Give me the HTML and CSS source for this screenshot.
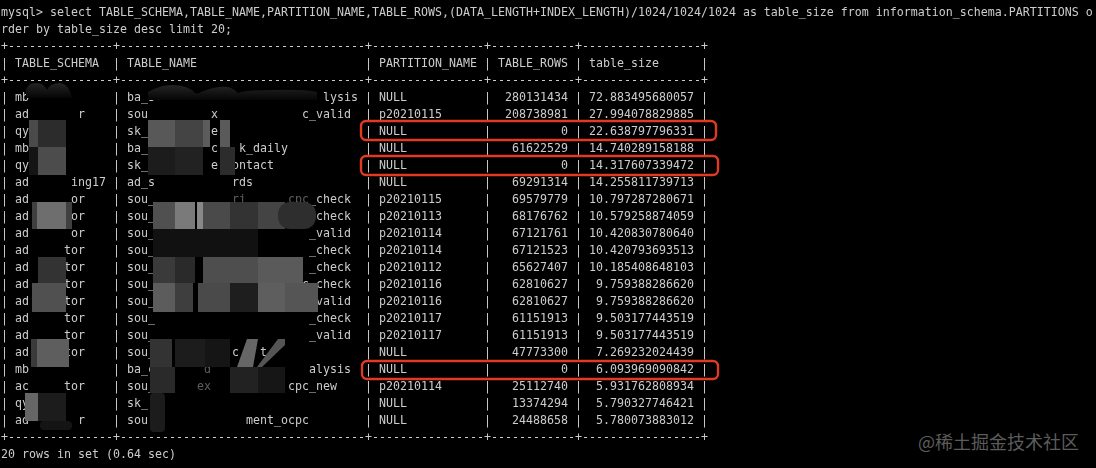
FILE: index.html
```html
<!DOCTYPE html>
<html lang="en">
<head>
<meta charset="utf-8">
<title>mysql terminal</title>
<link rel="stylesheet" href="styles.css">
</head>
<body>
<main class="terminal">
<pre class="output">mysql&gt; select TABLE_SCHEMA,TABLE_NAME,PARTITION_NAME,TABLE_ROWS,(DATA_LENGTH+INDEX_LENGTH)/1024/1024/1024 as table_size from information_schema.PARTITIONS o
rder by table_size desc limit 20;</pre>
<pre class="output table">+---------------+-----------------------------------+----------------+------------+-----------------+
| TABLE_SCHEMA  | TABLE_NAME                        | PARTITION_NAME | TABLE_ROWS | table_size      |
+---------------+-----------------------------------+----------------+------------+-----------------+
| mb            | ba_s                        lysis | NULL           |  280131434 | 72.883495680057 |
| ad       r    | sou         x            c_valid  | p20210115      |  208738981 | 27.994078829885 |
| qy            | sk_         e                     | NULL           |          0 | 22.638797796331 |
| mb            | ba_         c   k_daily           | NULL           |   61622529 | 14.740289158188 |
| qy            | sk_         e  ontact             | NULL           |          0 | 14.317607339472 |
| ad      ing17 | ad_s           rds                | NULL           |   69291314 | 14.255811739713 |
| ad      or    | sou_           ri      cpc_check  | p20210115      |   69579779 | 10.797287280671 |
| ad      or    | sou_                       check  | p20210113      |   68176762 | 10.579258874059 |
| ad      or    | sou_                      _valid  | p20210114      |   67121761 | 10.420830780640 |
| ad     tor    | sou_                      _check  | p20210114      |   67121523 | 10.420793693513 |
| ad     tor    | sou_                      _check  | p20210112      |   65627407 | 10.185408648103 |
| ad     tor    | sou_                     c_check  | p20210116      |   62810627 |  9.759388286620 |
| ad     tor    | sou_                       valid  | p20210116      |   62810627 |  9.759388286620 |
| ad     tor    | sou_                      _check  | p20210117      |   61151913 |  9.503177443519 |
| ad     tor    | sou_                      _valid  | p20210117      |   61151913 |  9.503177443519 |
| ad     tor    | sou_       d   c   t              | NULL           |   47773300 |  7.269232024439 |
| mb            | ba_c       d              alysis  | NULL           |          0 |  6.093969090842 |
| ac     tor    | sou_      ex           cpc_new    | p20210114      |   25112740 |  5.931762808934 |
| qy            | sk_                               | NULL           |   13374294 |  5.790327746421 |
| ad       r    | sou              ment_ocpc        | NULL           |   24488658 |  5.780073883012 |
+---------------+-----------------------------------+----------------+------------+-----------------+
20 rows in set (0.64 sec)</pre>
<svg class="overlay" width="1096" height="468" viewBox="0 0 1096 468" aria-hidden="true">
  <defs>
    <linearGradient id="dome" x1="0" y1="0" x2="0" y2="1">
      <stop offset="0" stop-color="#242424"/>
      <stop offset="1" stop-color="#050505"/>
    </linearGradient>
  </defs>
  <!-- domes at the top of the blur -->
  <path fill="url(#dome)" d="M26 98V90Q28 83 36 83Q44 83 47 90Q50 83 60 83Q69 84 72 98Z"/>
  <path fill="url(#dome)" d="M148 100V92Q160 85 172 85Q188 85 195 93Q199 94 201 92Q215 86 228 87Q235 89 238 93Q245 90 270 90Q305 89 317 92V100Z"/>
  <!-- half-covered glyphs -->
  <g fill="#000000" fill-opacity="0.55">
    <rect x="232" y="190" width="14" height="16"/>
    <rect x="288" y="190" width="21" height="16"/>
    <rect x="204" y="361" width="8" height="16"/>
    <rect x="197" y="378" width="15" height="16"/>
  </g>
  <!-- schema column mosaic -->
  <rect x="29" y="120" width="9" height="27" fill="#4a4a4a"/>
  <rect x="38" y="120" width="28" height="27" fill="#2c2c2c"/>
  <rect x="29" y="147" width="9" height="28" fill="#141414"/>
  <rect x="38" y="147" width="28" height="28" fill="#4c4c4c"/>
  <rect x="32" y="202" width="5" height="27" fill="#404040"/>
  <rect x="37" y="202" width="29" height="27" fill="#6e6e6e"/>
  <rect x="66" y="202" width="6" height="27" fill="#404040"/>
  <rect x="38" y="257" width="28" height="26" fill="#333333"/>
  <rect x="32" y="283" width="34" height="29" fill="#505050"/>
  <rect x="31" y="339" width="6" height="28" fill="#3a3a3a"/>
  <rect x="37" y="339" width="32" height="28" fill="#5e5e5e"/>
  <rect x="25" y="393" width="13" height="28" fill="#666666"/>
  <rect x="38" y="393" width="28" height="28" fill="#1c1c1c"/>
  <rect x="40" y="421" width="32" height="9" rx="4" fill="#141414"/>
  <!-- name column mosaic -->
  <rect x="148" y="120" width="27" height="27" fill="#585858"/>
  <rect x="175" y="120" width="28" height="27" fill="#444444"/>
  <rect x="203" y="120" width="7" height="27" fill="#5c5c5c"/>
  <rect x="220" y="120" width="10" height="27" fill="#5a5a5a"/>
  <rect x="148" y="147" width="27" height="28" fill="#1c1c1c"/>
  <rect x="175" y="147" width="28" height="28" fill="#222222"/>
  <rect x="220" y="147" width="15" height="28" fill="#2c2c2c"/>
  <rect x="153" y="202" width="22" height="27" fill="#505050"/>
  <rect x="175" y="202" width="20" height="27" fill="#7a7a7a"/>
  <rect x="197" y="202" width="6" height="27" fill="#888888"/>
  <rect x="203" y="202" width="27" height="27" fill="#4a4a4a"/>
  <rect x="230" y="202" width="28" height="27" fill="#333333"/>
  <rect x="258" y="202" width="27" height="27" fill="#444444"/>
  <rect x="278" y="202" width="38" height="27" rx="12" fill="#2e2e2e"/>
  <rect x="153" y="229" width="105" height="28" fill="#111111"/>
  <rect x="153" y="257" width="22" height="26" fill="#3a3a3a"/>
  <rect x="175" y="257" width="20" height="26" fill="#2a2a2a"/>
  <rect x="203" y="257" width="55" height="26" fill="#4e4e4e"/>
  <rect x="258" y="257" width="45" height="26" fill="#5a5a5a"/>
  <rect x="153" y="283" width="22" height="29" fill="#5c5c5c"/>
  <rect x="175" y="283" width="18" height="29" fill="#3e3e3e"/>
  <rect x="198" y="283" width="32" height="29" fill="#4a4a4a"/>
  <rect x="230" y="283" width="28" height="29" fill="#1e1e1e"/>
  <rect x="258" y="283" width="27" height="29" fill="#5e5e5e"/>
  <rect x="285" y="283" width="33" height="29" fill="#555555"/>
  <rect x="150" y="339" width="22" height="28" fill="#333333"/>
  <rect x="175" y="339" width="30" height="28" fill="#1c1c1c"/>
  <rect x="205" y="339" width="25" height="28" fill="#151515"/>
  <polygon points="247,339 258,339 253,367 237,367" fill="#666666"/>
  <polygon points="278,339 285,339 285,345 262,367 257,367" fill="#555555"/>
  <rect x="150" y="367" width="25" height="26" fill="#2a2a2a"/>
  <rect x="230" y="367" width="28" height="26" fill="#222222"/>
  <rect x="258" y="367" width="27" height="26" fill="#161616"/>
  <rect x="150" y="393" width="15" height="39" rx="4" fill="#1c1c1c"/>
  <!-- red highlight boxes -->
  <g fill="none" stroke="#e03a22" stroke-width="2.4">
    <rect x="361" y="121" width="355" height="19" rx="5"/>
    <rect x="361" y="156" width="357" height="19" rx="5"/>
    <rect x="362" y="361" width="356" height="18" rx="5"/>
  </g>
</svg>
<div class="watermark">@稀土掘金技术社区</div>
</main>
</body>
</html>
```
FILE: styles.css
```css
html, body {
  margin: 0;
  padding: 0;
  background: #000;
}

.terminal {
  position: relative;
  width: 1096px;
  height: 468px;
  padding-top: 4px;
  box-sizing: border-box;
  overflow: hidden;
  background: #000;
}

.output {
  margin: 0;
  padding-left: 1px;
  font-family: "DejaVu Sans Mono", monospace;
  font-size: 11.63px;
  line-height: 17px;
  color: #cccccc;
  white-space: pre;
  filter: blur(0.4px);
}

.table {
  width: fit-content;
}

.overlay {
  position: absolute;
  top: 0;
  left: 0;
}

.watermark {
  position: absolute;
  right: 17px;
  bottom: 16px;
  font-family: "Noto Sans CJK SC", "Noto Sans", sans-serif;
  font-size: 18px;
  line-height: 22px;
  color: #5c5c5c;
  white-space: nowrap;
}
```
